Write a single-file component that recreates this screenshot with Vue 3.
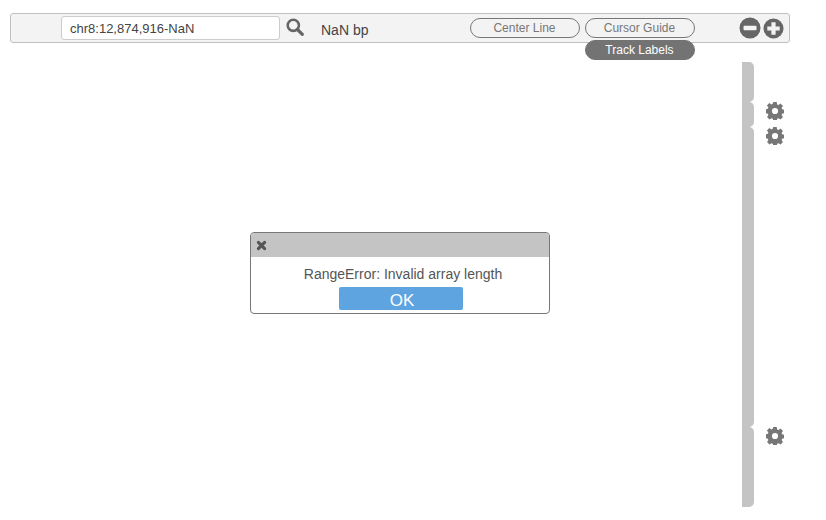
<script setup>
const rows = [
  { h: 40, gear: false },
  { h: 25, gear: true },
  { h: 300, gear: true },
  { h: 80, gear: true }
]
</script>

<template>
  <div class="page">
    <header class="nav">
      <input class="locus" value="chr8:12,874,916-NaN" />
      <svg class="search" viewBox="0 0 18 18" width="18" height="18">
        <circle cx="7.3" cy="7.3" r="5.6" fill="none" stroke="#666" stroke-width="2.6" />
        <path d="M11.5 11.5 L16.3 16.3" stroke="#666" stroke-width="3.2" stroke-linecap="round" />
      </svg>
      <span class="bp">NaN bp</span>
      <div class="toggles">
        <button class="pill">Center Line</button>
        <div class="stack">
          <button class="pill">Cursor Guide</button>
          <button class="pill on">Track Labels</button>
        </div>
      </div>
      <div class="zoom">
        <svg viewBox="0 0 22 22" width="22" height="22">
          <circle cx="11" cy="11" r="10.5" fill="#666" />
          <rect x="4.5" y="8.8" width="13" height="4.4" rx="1" fill="#f3f3f3" />
        </svg>
        <svg viewBox="0 0 22 22" width="21" height="21">
          <circle cx="11" cy="11" r="10.5" fill="#666" />
          <path d="M8.8 4.5h4.4v4.3h4.3v4.4h-4.3v4.3H8.8v-4.3H4.5V8.8h4.3z" fill="#f3f3f3" />
        </svg>
      </div>
    </header>

    <div class="tracks">
      <div v-for="(r, i) in rows" :key="i" class="row" :style="{ height: r.h + 'px' }">
        <div class="handle"></div>
        <svg v-if="r.gear" class="gear" viewBox="0 0 18 18" width="18" height="18">
          <path
            fill="#777"
            fill-rule="evenodd"
            d="M7.3 0h3.4l.5 2.4 1.3.55 2.05-1.35 2.4 2.4-1.35 2.05.55 1.3 2.4.5v3.4l-2.4.5-.55 1.3 1.35 2.05-2.4 2.4-2.05-1.35-1.3.55-.5 2.4H7.3l-.5-2.4-1.3-.55-2.05 1.35-2.4-2.4 1.35-2.05-.55-1.3-2.4-.5V7.3l2.4-.5.55-1.3L.95 3.45l2.4-2.4L5.4 2.4l1.3-.55zM9 5.9a3.1 3.1 0 1 0 0 6.2 3.1 3.1 0 0 0 0-6.2z"
          />
        </svg>
      </div>
    </div>

    <div class="dialog">
      <div class="dialog-head">
        <svg viewBox="0 0 12 12" width="11" height="11">
          <path d="M2.6 2.6 L9.4 9.4 M9.4 2.6 L2.6 9.4" stroke="#555" stroke-width="3.4" stroke-linecap="round" />
        </svg>
      </div>
      <div class="dialog-msg">RangeError: Invalid array length</div>
      <button class="ok">OK</button>
    </div>
  </div>
</template>

<style scoped>
.page {
  position: relative;
  width: 826px;
  height: 520px;
  overflow: hidden;
  background: #fff;
  font-family: "Liberation Sans", Arial, sans-serif;
  color: #444;
}
.nav {
  box-sizing: border-box;
  display: flex;
  align-items: center;
  width: 780px;
  height: 30px;
  margin: 13px 0 0 10px;
  padding-left: 50px;
  background: #f3f3f3;
  border: 1px solid #c0c0c0;
  border-radius: 3px;
}
.locus {
  box-sizing: border-box;
  width: 219px;
  height: 24px;
  padding: 0 8px;
  border: 1px solid #ccc;
  border-radius: 3px;
  background: #fff;
  font: 13px "Liberation Sans", Arial, sans-serif;
  color: #444;
  outline: none;
}
.search {
  margin: -3px 0 0 6px;
}
.bp {
  margin: 3px 0 0 17px;
  font-size: 14px;
  color: #444;
}
.toggles {
  display: flex;
  align-items: flex-start;
  gap: 5px;
  margin-left: 102px;
  height: 20px;
}
.stack {
  display: flex;
  flex-direction: column;
  gap: 2px;
}
.pill {
  box-sizing: border-box;
  width: 110px;
  height: 20px;
  padding: 0 2px 0 0;
  border: 1px solid #777;
  border-radius: 10px;
  background: #f3f3f3;
  font: 12px "Liberation Sans", Arial, sans-serif;
  color: #777;
}
.pill.on {
  background: #737373;
  border-color: #737373;
  color: #fff;
}
.zoom {
  display: flex;
  align-items: center;
  gap: 2px;
  margin-left: 44px;
}
.zoom svg {
  display: block;
}
.tracks {
  display: flex;
  flex-direction: column;
  width: 44px;
  margin: 19px 0 0 742px;
}
.row {
  display: flex;
  align-items: flex-start;
}
.handle {
  width: 12px;
  height: 100%;
  background: #c4c4c4;
  border-radius: 0 5px 5px 0;
}
.gear {
  margin-left: 12px;
}
.dialog {
  position: absolute;
  left: 250px;
  top: 232px;
  box-sizing: border-box;
  width: 300px;
  height: 82px;
  display: flex;
  flex-direction: column;
  align-items: center;
  background: #fff;
  border: 1px solid #777;
  border-radius: 4px;
  overflow: hidden;
}
.dialog-head {
  display: flex;
  align-items: center;
  align-self: stretch;
  height: 24px;
  padding-left: 5px;
  background: #c4c4c4;
}
.dialog-msg {
  margin: 9px 0 0 6px;
  font-size: 14px;
  line-height: 16px;
  color: #555;
}
.ok {
  width: 124px;
  height: 23px;
  margin: 5px 0 0 2px;
  padding: 4px 0 0 2px;
  border: 0;
  border-radius: 2px;
  background: #5ea4e0;
  color: #fff;
  font: 17px "Liberation Sans", Arial, sans-serif;
}
</style>
